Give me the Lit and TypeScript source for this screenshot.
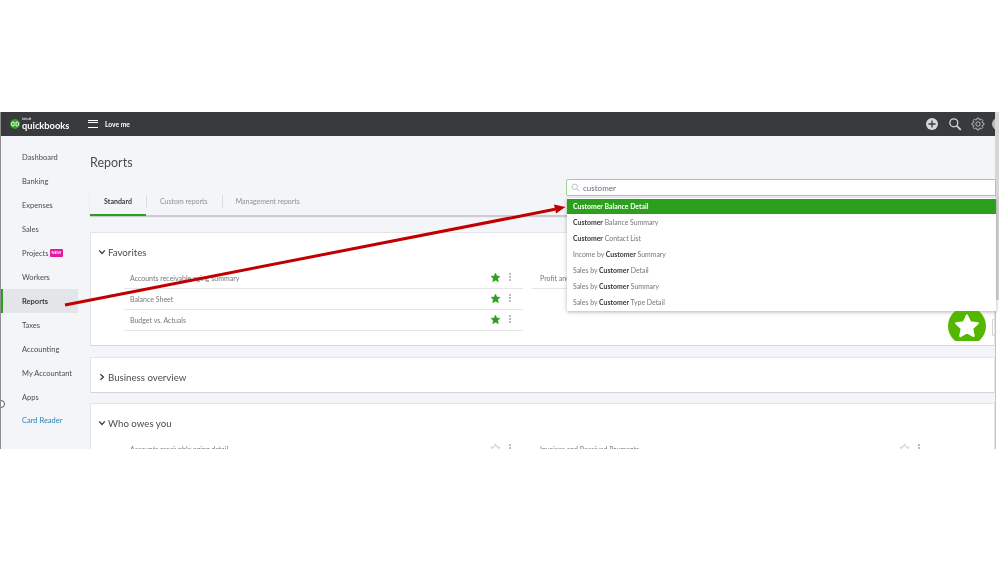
import { LitElement, html, css, svg } from "lit";
import { customElement } from "lit/decorators.js";

const NAV = [
  "Dashboard",
  "Banking",
  "Expenses",
  "Sales",
  "Projects",
  "Workers",
  "Reports",
  "Taxes",
  "Accounting",
  "My Accountant",
  "Apps",
];

// [text, bold?] runs for the search results
const RESULTS: [string, boolean][][] = [
  [["Customer Balance Detail", true]],
  [["Customer", true], [" Balance Summary", false]],
  [["Customer", true], [" Contact List", false]],
  [["Income by ", false], ["Customer", true], [" Summary", false]],
  [["Sales by ", false], ["Customer", true], [" Detail", false]],
  [["Sales by ", false], ["Customer", true], [" Summary", false]],
  [["Sales by ", false], ["Customer", true], [" Type Detail", false]],
];

const STAR = "M12 2.2l3 6.5 7 .8-5.2 4.8 1.4 7L12 17.8l-6.2 3.5 1.4-7L2 9.5l7-.8z";

// outline of an 8 tooth cog, centred on 7,7
const gearPath = () => {
  const pts: string[] = [];
  for (let i = 0; i < 8; i++) {
    const a = (i * Math.PI) / 4;
    const at = (r: number, off: number) =>
      `${(7 + r * Math.cos(a + off)).toFixed(2)} ${(7 + r * Math.sin(a + off)).toFixed(2)}`;
    pts.push(at(4.5, -0.3), at(6, -0.16), at(6, 0.16), at(4.5, 0.3));
  }
  return `M${pts.join("L")}z`;
};

const starIcon = (filled: boolean) => html`
  <svg class="star" viewBox="0 0 24 24">
    <path
      d=${STAR}
      fill=${filled ? "#2ca01c" : "none"}
      stroke=${filled ? "#2ca01c" : "#b5b7bb"}
      stroke-width=${filled ? "1" : "1.6"}
    />
  </svg>
`;

const dots = html`<span class="dots"><i></i><i></i><i></i></span>`;

const chevron = (open: boolean) => html`
  <svg class="chev" viewBox="0 0 10 10">
    <path
      d=${open ? "M1.5 3l3.5 3.8L8.5 3" : "M3 1.5L6.8 5 3 8.5"}
      fill="none"
      stroke="#393a3d"
      stroke-width="1.6"
    />
  </svg>
`;

@customElement("app-root")
export class AppRoot extends LitElement {
  static styles = css`
    :host {
      display: block;
      position: relative;
      width: 999px;
      height: 562px;
      background: #fff;
      overflow: hidden;
      font-family: "Lato", "Noto Sans", sans-serif;
      color: #393a3d;
    }
    .shot {
      position: absolute;
      left: 0;
      top: 112px;
      width: 999px;
      height: 337px;
      overflow: hidden;
      display: flex;
      flex-direction: column;
      background: #f4f5f8;
      border-left: 1px solid #8d8d8d;
      box-sizing: border-box;
      filter: blur(0.5px);
    }
    header {
      height: 24px;
      flex: none;
      background: #393a3d;
      display: flex;
      align-items: center;
      margin-right: 4px;
      color: #fff;
    }
    .logo {
      display: flex;
      align-items: center;
      margin-left: 9px;
      width: 78px;
      gap: 2px;
    }
    .logo-mark {
      width: 10px;
      height: 10px;
      margin-top: -1px;
    }
    .logo-text {
      display: flex;
      flex-direction: column;
      font-weight: 700;
      font-size: 9.3px;
      line-height: 9px;
      margin-top: -2px;
    }
    .logo-text small {
      font-size: 4px;
      line-height: 5px;
      font-weight: 400;
    }
    .burger {
      width: 10px;
      height: 8px;
      border-top: 1.5px solid #fff;
      border-bottom: 1.5px solid #fff;
      position: relative;
      box-sizing: border-box;
      margin-right: 7px;
      margin-top: -1px;
    }
    .burger::after {
      content: "";
      position: absolute;
      left: 0;
      right: 0;
      top: 1.25px;
      height: 1.5px;
      background: #fff;
    }
    .company {
      font-size: 6.7px;
      font-weight: 700;
      margin-top: -1px;
    }
    .head-icons {
      margin-left: auto;
      display: flex;
      align-items: center;
      gap: 9px;
      margin-right: -1px;
      margin-top: -1px;
    }
    .head-icons svg {
      width: 14px;
      height: 14px;
      display: block;
    }
    .head-icons svg:last-child {
      margin-left: -12px;
      transform: translateX(9px);
    }
    .body {
      flex: 1;
      display: flex;
      min-height: 0;
      margin-right: 4px;
    }
    nav {
      width: 89px;
      flex: none;
      padding-top: 9px;
      box-sizing: border-box;
    }
    .nav-item {
      height: 24px;
      width: 77px;
      display: flex;
      align-items: center;
      padding-left: 21px;
      box-sizing: border-box;
      font-size: 7.5px;
      color: #4a4c50;
      gap: 1px;
    }
    .nav-item.active {
      background: #e3e5e8;
      border-left: 2px solid #2ca01c;
      padding-left: 19px;
      font-weight: 700;
      color: #393a3d;
    }
    .nav-item.link {
      color: #2b7fc0;
      margin-top: -1px;
    }
    .new {
      background: #e5199f;
      color: #fff;
      font-size: 4px;
      font-weight: 700;
      line-height: 8px;
      padding: 0 2px;
      border-radius: 1px;
    }
    main {
      flex: 1;
      min-width: 0;
    }
    h1 {
      margin: 0;
      font-size: 12.5px;
      font-weight: 400;
      line-height: 16px;
      padding-top: 19px;
      color: #4a4c50;
    }
    .tabs {
      margin-top: 17px;
      height: 28px;
      display: flex;
      align-items: stretch;
      box-sizing: border-box;
      border-bottom: 1px solid #c9cbcf;
      box-shadow: 0 1px 1px rgba(0, 0, 0, 0.16);
      font-size: 7px;
      color: #8d9096;
    }
    .tab {
      display: flex;
      align-items: center;
      padding: 0 14px 2px;
      position: relative;
    }
    .tab + .tab::before {
      content: "";
      position: absolute;
      left: 0;
      top: 7px;
      bottom: 7px;
      width: 1px;
      background: #dcdde0;
    }
    .tab.on {
      color: #393a3d;
      font-weight: 700;
      box-sizing: border-box;
      width: 56px;
      justify-content: center;
      padding: 0;
      border-bottom: 2px solid #2ca01c;
      margin-bottom: -1px;
    }
    .card {
      background: #fff;
      border: 1px solid #e3e5e8;
      border-bottom: 1.5px solid #d4d7dc;
      box-sizing: border-box;
      margin-bottom: 10px;
    }
    .card.first {
      margin-top: 16px;
      height: 114px;
      margin-bottom: 11px;
    }
    .card.closed {
      height: 36px;
      display: flex;
      align-items: center;
    }
    .closed .card-title {
      padding-top: 3px;
    }
    .card-title {
      display: flex;
      align-items: center;
      font-size: 9.7px;
      color: #4a4c50;
      padding-left: 7px;
      gap: 2px;
    }
    .open .card-title {
      height: 38px;
    }
    .chev {
      width: 8px;
      height: 8px;
    }
    .grid {
      display: grid;
      grid-template-columns: 399px 400px;
      column-gap: 9px;
      margin-left: 33px;
      margin-top: -3px;
    }
    .row {
      height: 21px;
      display: flex;
      align-items: center;
      padding-left: 6px;
      border-bottom: 1px solid #e3e5e8;
      font-size: 7px;
      color: #75777c;
      box-sizing: border-box;
    }
    .grid > div + div .row {
      padding-left: 8px;
    }
    .row span.label {
      flex: 1;
    }
    .star {
      width: 11px;
      height: 11px;
      margin: -2px 8px 0 0;
    }
    .dots {
      display: flex;
      flex-direction: column;
      gap: 1px;
      margin: -2px 12px 0 0;
    }
    .dots i {
      width: 2px;
      height: 2px;
      border-radius: 50%;
      background: #a4a6ab;
    }
    .scroll {
      position: absolute;
      right: 0;
      top: 0;
      bottom: 0;
      width: 4px;
      background: #fff;
      border-left: 1px solid #c4c4c4;
      box-sizing: border-box;
    }
    .scroll::before {
      content: "";
      position: absolute;
      left: -1px;
      right: 0;
      top: 0;
      height: 188px;
      background: #d6d6d6;
    }
    .search {
      position: absolute;
      left: 565px;
      top: 67px;
      width: 430px;
      height: 17px;
      background: #fff;
      border: 1px solid #9bd295;
      border-radius: 2px 0 0 2px;
      box-sizing: border-box;
      display: flex;
      align-items: center;
      padding-left: 4px;
      gap: 3px;
      font-size: 8px;
      color: #6b6c72;
    }
    .search svg {
      width: 9px;
      height: 9px;
    }
    .drop {
      position: absolute;
      left: 566px;
      top: 86px;
      width: 429px;
      height: 113px;
      background: #fff;
      box-shadow: 0 1px 4px rgba(0, 0, 0, 0.3);
      font-size: 6.9px;
      color: #75777c;
      padding-top: 1px;
      box-sizing: border-box;
    }
    .res {
      height: 16px;
      line-height: 15px;
      padding-left: 6px;
      white-space: pre;
    }
    .res b {
      color: #393a3d;
    }
    .res.on {
      background: #2ca01c;
      height: 15px;
      margin-bottom: 1px;
      line-height: 14px;
    }
    .res.on b {
      color: #fff;
    }
    .badge {
      position: absolute;
      left: 947px;
      top: 199px;
      width: 38px;
      height: 30px;
      overflow: hidden;
    }
    .badge svg {
      display: block;
      width: 38px;
      height: 38px;
      margin-top: -4px;
    }
    .chat {
      position: absolute;
      left: 991px;
      top: 207px;
      width: 4px;
      height: 17px;
      border: 1px solid #d0d2d5;
      border-right: none;
      border-radius: 2px 0 0 2px;
      box-sizing: border-box;
    }
    .cursor {
      position: absolute;
      left: -4px;
      top: 288px;
      width: 8px;
      height: 8px;
      border: 1px solid #555;
      border-radius: 50%;
      box-sizing: border-box;
      background: #fff;
    }
    .arrow {
      position: absolute;
      left: 0;
      top: 0;
      pointer-events: none;
      filter: blur(0.3px);
    }
  `;

  private renderRow(label: string, filled: boolean) {
    return html`
      <div class="row">
        <span class="label">${label}</span>
        ${starIcon(filled)} ${dots}
      </div>
    `;
  }

  render() {
    return html`
      <div class="shot">
        <header>
          <div class="logo">
            <svg class="logo-mark" viewBox="0 0 20 20">
              <circle cx="10" cy="10" r="10" fill="#2ca01c" />
              <path
                d="M8 6H6.5a4 4 0 0 0 0 8H8V6zM12 14h1.5a4 4 0 0 0 0-8H12v8z"
                fill="none"
                stroke="#fff"
                stroke-width="1.8"
              />
            </svg>
            <div class="logo-text"><small>intuit</small>quickbooks</div>
          </div>
          <div class="burger"></div>
          <div class="company">Love me</div>
          <div class="head-icons">
            <svg viewBox="0 0 14 14">
              <circle cx="7" cy="7" r="6" fill="#d4d7dc" />
              <path d="M7 3.5v7M3.5 7h7" stroke="#393a3d" stroke-width="1.3" />
            </svg>
            <svg viewBox="0 0 14 14">
              <circle cx="5.8" cy="5.8" r="4" fill="none" stroke="#d4d7dc" stroke-width="1.3" />
              <path d="M8.8 8.8l4 4" stroke="#d4d7dc" stroke-width="1.7" />
            </svg>
            <svg viewBox="0 0 14 14">
              <path d=${gearPath()} fill="none" stroke="#c4c6ca" stroke-width="0.9" />
              <circle cx="7" cy="7" r="2.2" fill="none" stroke="#c4c6ca" stroke-width="0.9" />
            </svg>
            <svg viewBox="0 0 14 14"><circle cx="7" cy="7" r="6" fill="#b9bbbf" /></svg>
          </div>
        </header>
        <div class="body">
          <nav>
            ${NAV.map(
              (n) => html`
                <div class="nav-item ${n === "Reports" ? "active" : ""}">
                  ${n} ${n === "Projects" ? html`<span class="new">NEW</span>` : ""}
                </div>
              `
            )}
            <div class="nav-item link">Card Reader</div>
          </nav>
          <main>
            <h1>Reports</h1>
            <div class="tabs">
              <div class="tab on">Standard</div>
              <div class="tab">Custom reports</div>
              <div class="tab">Management reports</div>
            </div>
            <section class="card first open">
              <div class="card-title">${chevron(true)} Favorites</div>
              <div class="grid">
                <div>
                  ${this.renderRow("Accounts receivable aging summary", true)}
                  ${this.renderRow("Balance Sheet", true)}
                  ${this.renderRow("Budget vs. Actuals", true)}
                </div>
                <div>${this.renderRow("Profit and Loss", true)}</div>
              </div>
            </section>
            <section class="card closed">
              <div class="card-title">${chevron(false)} Business overview</div>
            </section>
            <section class="card open">
              <div class="card-title">${chevron(true)} Who owes you</div>
              <div class="grid">
                <div>${this.renderRow("Accounts receivable aging detail", false)}</div>
                <div>${this.renderRow("Invoices and Received Payments", false)}</div>
              </div>
            </section>
          </main>
        </div>
        <div class="scroll"></div>
        <div class="search">
          <svg viewBox="0 0 12 12">
            <circle cx="5" cy="5" r="3.6" fill="none" stroke="#a9acb1" stroke-width="1" />
            <path d="M7.7 7.7L11 11" stroke="#a9acb1" stroke-width="1.1" />
          </svg>
          customer
        </div>
        <div class="drop">
          ${RESULTS.map(
            (runs, i) => html`
              <div class="res ${i === 0 ? "on" : ""}">${runs.map(([t, bold]) => (bold ? html`<b>${t}</b>` : t))}</div>
            `
          )}
        </div>
        <div class="badge">
          <svg viewBox="0 0 38 38">
            <circle cx="19" cy="19" r="19" fill="#53b700" />
            <g transform="translate(6 6) scale(1.08)">
              ${svg`<path d=${STAR} fill="#fff" stroke="#fff" stroke-width="2" stroke-linejoin="round" />`}
            </g>
          </svg>
        </div>
        <div class="chat"></div>
        <div class="cursor"></div>
      </div>
      <svg class="arrow" width="999" height="562">
        <path d="M65 305L555 209.3" stroke="#c00000" stroke-width="3" fill="none" />
        <path d="M565.5 207L554 204.5L556 213.5z" fill="#c00000" />
      </svg>
    `;
  }
}
